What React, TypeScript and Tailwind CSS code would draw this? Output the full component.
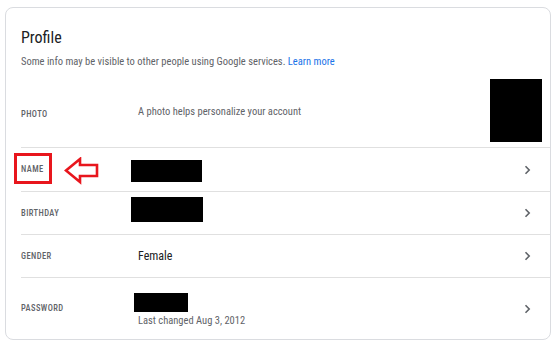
import React from 'react';

type Row = {
  label: string;
  height: string;
  value: React.ReactNode;
};

function Chevron() {
  return (
    <svg width="7" height="10" viewBox="0 0 7 10" className="mr-[19px] shrink-0">
      <path d="M1.5 1.2 5.2 5 1.5 8.8" fill="none" stroke="#5f6368" strokeWidth="1.6" />
    </svg>
  );
}

const rows: Row[] = [
  {
    label: 'Name',
    height: 'h-[44px]',
    value: <div className="-ml-[7px] mt-[3px] h-[22px] w-[71px] bg-black" />,
  },
  {
    label: 'Birthday',
    height: 'h-[43px]',
    value: <div className="-ml-[7px] mb-[8px] h-[25px] w-[72px] bg-black" />,
  },
  {
    label: 'Gender',
    height: 'h-[43px]',
    value: <span className="text-[12px] leading-4 text-[#202124]">Female</span>,
  },
  {
    label: 'Password',
    height: 'h-[62px]',
    value: (
      <div className="mt-[3px] flex flex-col">
        <div className="-ml-[4px] h-[19px] w-[54px] bg-black" />
        <span className="mt-[2px] text-[10.5px] leading-[14px] text-[#5f6368]">Last changed Aug 3, 2012</span>
      </div>
    ),
  },
];

export default function App() {
  return (
    <div className="h-[350px] w-[560px] bg-white pl-[5px] pt-[7px] font-['Roboto',sans-serif] [font-stretch:75%]">
      <div className="relative w-[546px] rounded-lg border border-[#dadce0] bg-white">
        <div className="pl-[15px] pt-5">
          <h1 className="text-[16px] leading-5 text-[#202124] [font-stretch:80%]">Profile</h1>
          <p className="mt-[6px] text-[10.5px] leading-4 text-[#5f6368]">
            Some info may be visible to other people using Google services.{' '}
            <a className="text-[#1a73e8]">Learn more</a>
          </p>
        </div>

        <div className="ml-[15px] mt-1">
          <div className="flex h-[73px] items-center">
            <div className="mt-[7px] w-[117px] text-[8.5px] font-medium uppercase tracking-[0.05em] text-[#5f6368]">Photo</div>
            <div className="mt-[3px] flex-1 text-[10.5px] text-[#5f6368]">A photo helps personalize your account</div>
            <div className="mr-[8px] h-[63px] w-[52px] bg-black" />
          </div>

          {rows.map((row) => (
            <div key={row.label} className={`flex items-center border-t border-[#e0e0e0] ${row.height}`}>
              <div className="w-[117px] text-[8.5px] font-medium uppercase tracking-[0.05em] text-[#5f6368]">
                {row.label}
              </div>
              <div className="flex flex-1 items-center">{row.value}</div>
              <Chevron />
            </div>
          ))}
        </div>

        {/* annotation over the name row */}
        <div className="absolute left-[8px] top-[145px] h-[31px] w-[38px] border-[3px] border-[#e8161d]" />
        <svg
          width="36"
          height="28"
          viewBox="0 0 36 28"
          className="absolute left-[58px] top-[149px]"
        >
          <path
            d="M2 13.5 16 2v6h17v11H16v6z"
            fill="none"
            stroke="#e8161d"
            strokeWidth="2.6"
            strokeLinejoin="miter"
          />
        </svg>
      </div>
    </div>
  );
}
